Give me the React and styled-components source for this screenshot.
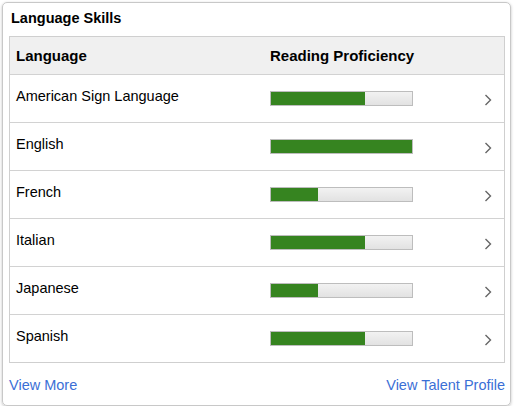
import React from 'react';
import styled, { createGlobalStyle } from 'styled-components';

const GlobalStyle = createGlobalStyle`
  body {
    margin: 0;
    background: #ffffff;
    font-family: Arial, "Liberation Sans", sans-serif;
    color: #000;
  }
`;

const Card = styled.div`
  box-sizing: border-box;
  width: 509px;
  height: 404px;
  margin: 2px 0 0 2px;
  border: 1px solid #c8c8c8;
  border-radius: 5px;
  box-shadow: 0 1px 3px rgba(0, 0, 0, 0.25);
  padding: 0 5px 0 6px;
  display: flex;
  flex-direction: column;
`;

const Title = styled.h2`
  margin: 0;
  box-sizing: border-box;
  height: 33px;
  padding: 0 0 3px 2px;
  display: flex;
  align-items: center;
  font-size: 14.5px;
  font-weight: bold;
`;

const Table = styled.div`
  border: 1px solid #cfcfcf;
`;

const Row = styled.div`
  display: grid;
  grid-template-columns: 254px 1fr 24px;
  height: ${(p) => (p.$head ? '37px' : '47px')};
  background: ${(p) => (p.$head ? '#f0f0f0' : '#fff')};
  border-bottom: 1px solid #d2d2d2;
  font-size: ${(p) => (p.$head ? '15px' : '14.5px')};
  font-weight: ${(p) => (p.$head ? 'bold' : 'normal')};
  align-items: ${(p) => (p.$head ? 'center' : 'start')};

  &:last-child {
    border-bottom: none;
  }
`;

const Cell = styled.div`
  padding-left: 6px;
  padding-top: ${(p) => p.$top || 0}px;
  line-height: 16px;
`;

const Bar = styled.div`
  box-sizing: border-box;
  width: 143px;
  height: 15px;
  margin-top: 16px;
  margin-left: 6px;
  border: 1px solid #bdbdbd;
  background: linear-gradient(#f2f2f2, #e2e2e2);
  position: relative;
  overflow: hidden;
`;

const Fill = styled.div`
  position: absolute;
  left: -1px;
  top: -1px;
  bottom: -1px;
  background: #368420;
`;

const Chevron = styled.div`
  margin-top: 19px;
  padding-left: 4px;
  display: flex;
`;

const Footer = styled.div`
  flex: 1;
  display: flex;
  align-items: center;
  justify-content: space-between;
  padding-top: 1px;
`;

const Link = styled.a`
  color: #3b6fd6;
  font-size: 14.5px;
  text-decoration: none;
  cursor: pointer;
`;

const languages = [
  { name: 'American Sign Language', level: 2 / 3 },
  { name: 'English', level: 1 },
  { name: 'French', level: 1 / 3 },
  { name: 'Italian', level: 2 / 3 },
  { name: 'Japanese', level: 1 / 3 },
  { name: 'Spanish', level: 2 / 3 },
];

const App = () => (
  <>
    <GlobalStyle />
    <Card>
      <Title>Language Skills</Title>
      <Table>
        <Row $head>
          <Cell>Language</Cell>
          <Cell>Reading Proficiency</Cell>
          <div />
        </Row>
        {languages.map((lang) => (
          <Row key={lang.name}>
            <Cell $top={13}>{lang.name}</Cell>
            <Bar>
              <Fill style={{ width: `${Math.round(lang.level * 143)}px` }} />
            </Bar>
            <Chevron>
              <svg width="8" height="12" viewBox="0 0 8 12">
                <path d="M1.5 1 L6.5 6 L1.5 11" fill="none" stroke="#666" strokeWidth="1.4" />
              </svg>
            </Chevron>
          </Row>
        ))}
      </Table>
      <Footer>
        <Link>View More</Link>
        <Link>View Talent Profile</Link>
      </Footer>
    </Card>
  </>
);

export default App;
